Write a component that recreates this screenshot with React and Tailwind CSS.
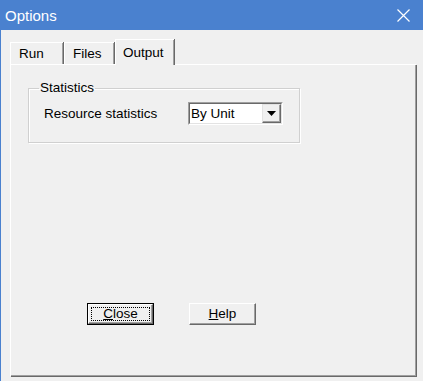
export default function App() {
  const font = { fontFamily: '"Liberation Sans", Arial, sans-serif' };

  return (
    <div
      className="flex h-[381px] w-[423px] flex-col overflow-hidden border-l border-[#4a81cf] bg-[#f0f0f0] text-black"
      style={font}
    >
      {/* Title bar */}
      <div className="flex h-[30px] shrink-0 items-center justify-between bg-[#4a81cf] pl-[4px] pr-[13px]">
        <span className="text-[15px] leading-none text-white">Options</span>
        <svg width="13" height="13" viewBox="0 0 13 13" className="text-white">
          <path d="M0.5 0.5 L12.5 12.5 M12.5 0.5 L0.5 12.5" stroke="currentColor" strokeWidth="1.2" />
        </svg>
      </div>

      {/* Body */}
      <div className="flex flex-col pl-[9px] pt-[9px]">
        {/* Tabs */}
        <div className="flex h-[25px] items-end text-[13.5px]">
          <div className="flex h-[22px] w-[53px] items-center border-l border-t border-white pl-[8px] pt-[2px] shadow-[inset_-1px_0_0_#a0a0a0,1px_0_0_#696969]">
            Run
          </div>
          <div className="ml-[1px] flex h-[22px] w-[50px] items-center border-l border-t border-white pl-[8px] pt-[2px] shadow-[inset_-1px_0_0_#a0a0a0,1px_0_0_#696969]">
            Files
          </div>
          <div className="relative z-10 -mb-[1px] ml-[1px] flex h-[26px] w-[59px] items-start border-l border-t border-white bg-[#f0f0f0] pl-[7px] pt-[3px] shadow-[inset_-1px_0_0_#a0a0a0,1px_0_0_#696969]">
            Output
          </div>
        </div>

        {/* Panel */}
        <div className="flex h-[312px] w-[406px] flex-col border-l border-t border-white shadow-[inset_-1px_-1px_0_#a0a0a0,1px_1px_0_#696969]">
          {/* Group box */}
          <fieldset className="ml-[17px] mt-[16px] h-[62px] w-[272px] border border-[#d0d0d0] pl-[15px] shadow-[inset_1px_1px_0_#ffffff,1px_1px_0_#ffffff]">
            <legend className="ml-[-5px] px-[1px] text-[13.5px] leading-[14px]">Statistics</legend>
            <div className="mt-[7px] flex items-center text-[13.5px]">
              <span className="w-[144px] pt-[1px]">Resource statistics</span>
              <div className="flex h-[23px] w-[95px] border border-t-[#a0a0a0] border-l-[#a0a0a0] border-r-white border-b-white">
                <div className="flex flex-1 border border-t-[#696969] border-l-[#696969] border-r-[#e3e3e3] border-b-[#e3e3e3] bg-white">
                  <span className="flex-1 pl-[1px] leading-[19px]">By Unit</span>
                  <div className="flex w-[19px] items-center justify-center border border-t-[#e3e3e3] border-l-[#e3e3e3] border-r-[#696969] border-b-[#696969] bg-[#f0f0f0] shadow-[inset_-1px_-1px_0_#a0a0a0]">
                    <svg width="9" height="5" viewBox="0 0 9 5">
                      <path d="M0 0 H9 L4.5 5 Z" fill="#000" />
                    </svg>
                  </div>
                </div>
              </div>
            </div>
          </fieldset>

          {/* Buttons */}
          <div className="ml-[76px] mt-[160px] flex gap-[35px] text-[13.5px]">
            <button className="flex h-[22px] w-[67px] border border-black p-0">
              <div className="flex flex-1 border border-t-white border-l-white border-r-[#696969] border-b-[#696969] p-[2px] shadow-[inset_-1px_-1px_0_#a0a0a0]">
                <div className="flex flex-1 items-center justify-center border border-dotted border-black leading-none">
                  <span>
                    <span className="underline underline-offset-1">C</span>lose
                  </span>
                </div>
              </div>
            </button>
            <button className="flex h-[22px] w-[67px] items-center justify-center border border-t-white border-l-white border-r-[#696969] border-b-[#696969] leading-none shadow-[inset_-1px_-1px_0_#a0a0a0]">
              <span>
                <span className="underline underline-offset-1">H</span>elp
              </span>
            </button>
          </div>
        </div>
      </div>
    </div>
  );
}
